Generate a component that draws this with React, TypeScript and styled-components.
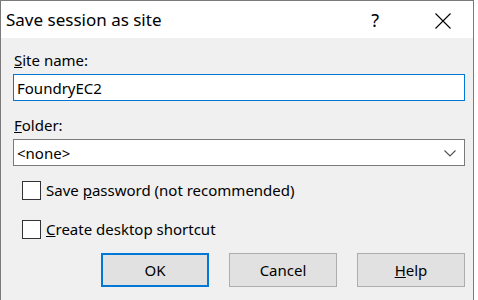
import styled, { createGlobalStyle } from "styled-components";

const GlobalStyle = createGlobalStyle`
  html, body {
    margin: 0;
    padding: 0;
    background: #ffffff;
    overflow: hidden;
  }
  body {
    font-family: "Noto Sans", "Open Sans", sans-serif;
  }
`;

export default function App() {
  return (
    <>
      <GlobalStyle />
      <Dialog>
        <TitleBar>
          <Title>Save session as site</Title>
          <HelpGlyph>?</HelpGlyph>
          <CloseButton aria-label="Close">
            <svg width="16" height="16" viewBox="0 0 16 16">
              <path d="M0.5 0.5 L15.5 15.5 M15.5 0.5 L0.5 15.5" stroke="#000" strokeWidth="1.1" fill="none" />
            </svg>
          </CloseButton>
        </TitleBar>
        <Body>
          <Label $top={12}><u>S</u>ite name:</Label>
          <TextInput $focused defaultValue="FoundryEC2" />
          <Label $top={14}><u>F</u>older:</Label>
          <Combo>
            <span>&lt;none&gt;</span>
            <svg width="12" height="7" viewBox="0 0 12 7">
              <path d="M0.5 0.5 L6 6 L11.5 0.5" stroke="#505050" strokeWidth="1.1" fill="none" />
            </svg>
          </Combo>
          <CheckRow $top={14}>
            <Box />
            <CheckText>Save <u>p</u>assword (not recommended)</CheckText>
          </CheckRow>
          <CheckRow $top={19}>
            <Box />
            <CheckText><u>C</u>reate desktop shortcut</CheckText>
          </CheckRow>
          <ButtonRow>
            <Button $primary>OK</Button>
            <Button>Cancel</Button>
            <Button><u>H</u>elp</Button>
          </ButtonRow>
        </Body>
      </Dialog>
    </>
  );
}

const Dialog = styled.div`
  width: 474px;
  height: 300px;
  box-sizing: border-box;
  border: 1px solid #7a7a7a;
  border-bottom: none;
  background: #f0f0f0;
  display: flex;
  flex-direction: column;
  color: #000;
`;

const TitleBar = styled.div`
  height: 37px;
  flex-shrink: 0;
  background: #ffffff;
  display: flex;
  align-items: center;
  padding-left: 5px;
`;

const Title = styled.div`
  flex: 1;
  font-size: 17px;
  line-height: 20px;
  margin-top: 1px;
`;

const HelpGlyph = styled.div`
  font-size: 18px;
  line-height: 20px;
  margin-right: 56px;
  margin-top: 1px;
`;

const CloseButton = styled.div`
  width: 16px;
  height: 16px;
  margin-right: 22px;
  margin-top: 2px;
  display: flex;
`;

const Body = styled.div`
  display: flex;
  flex-direction: column;
  padding: 0 8px 0 12px;
`;

const Label = styled.div<{ $top: number }>`
  margin-top: ${(p) => p.$top}px;
  margin-bottom: 4px;
  font-size: 15px;
  line-height: 20px;
  margin-left: 1px;
`;

const TextInput = styled.input<{ $focused?: boolean }>`
  height: 27px;
  box-sizing: border-box;
  border: 1px solid ${(p) => (p.$focused ? "#0078d7" : "#7a7a7a")};
  background: #fff;
  padding: 0 3px;
  font-family: inherit;
  font-size: 15px;
  color: #000;
  outline: none;
  margin: 0;
`;

const Combo = styled.div`
  height: 27px;
  box-sizing: border-box;
  border: 1px solid #7a7a7a;
  background: #fff;
  display: flex;
  align-items: center;
  justify-content: space-between;
  padding: 0 8px 0 3px;
  font-size: 15px;

  svg {
    margin-top: 1px;
  }
`;

const CheckRow = styled.label<{ $top: number }>`
  display: flex;
  align-items: center;
  margin-top: ${(p) => p.$top}px;
  margin-left: 9px;
  gap: 5px;
`;

const Box = styled.span`
  width: 19px;
  height: 19px;
  box-sizing: border-box;
  border: 1px solid #333;
  background: #fff;
`;

const CheckText = styled.span`
  font-size: 15px;
  line-height: 20px;
`;

const ButtonRow = styled.div`
  display: flex;
  justify-content: flex-end;
  gap: 20px;
  margin-top: 14px;
`;

const Button = styled.div<{ $primary?: boolean }>`
  width: 108px;
  height: 34px;
  box-sizing: border-box;
  border: ${(p) => (p.$primary ? "2px solid #0078d7" : "1px solid #adadad")};
  background: #e1e1e1;
  display: flex;
  align-items: center;
  justify-content: center;
  font-size: 15px;
`;
